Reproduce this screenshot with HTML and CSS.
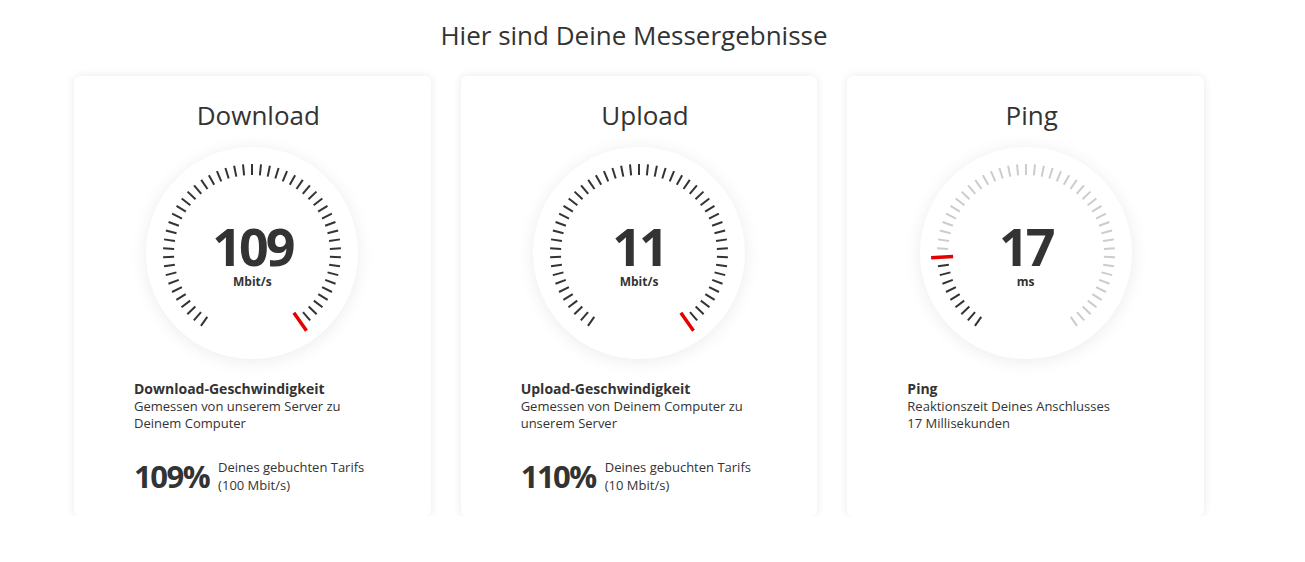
FILE: index.html
```html
<!DOCTYPE html>
<html lang="de">
<head>
  <meta charset="UTF-8" />
  <title>Messergebnisse</title>
  <link rel="stylesheet" href="styles.css">
</head>
<body>
  <div class="results">
    <h1 class="results-title">Hier sind Deine Messergebnisse</h1>

    <div class="cards">
      <div class="card">
        <h2 class="card-title">Download</h2>
        <div class="gauge">
          <svg class="dial" viewBox="-106 -106 212 212" data-filled="51" data-needle="50"></svg>
          <div class="gauge-value">
            <span class="gauge-number">109</span>
            <span class="gauge-unit">Mbit/s</span>
          </div>
        </div>
        <div class="info">
          <h3 class="info-title">Download-Geschwindigkeit</h3>
          <p class="info-text">Gemessen von unserem Server zu Deinem Computer</p>
        </div>
        <div class="tariff">
          <span class="tariff-percent">109%</span>
          <span class="tariff-text">Deines gebuchten Tarifs<br>(100 Mbit/s)</span>
        </div>
      </div>

      <div class="card">
        <h2 class="card-title">Upload</h2>
        <div class="gauge">
          <svg class="dial" viewBox="-106 -106 212 212" data-filled="51" data-needle="50"></svg>
          <div class="gauge-value">
            <span class="gauge-number">11</span>
            <span class="gauge-unit">Mbit/s</span>
          </div>
        </div>
        <div class="info">
          <h3 class="info-title">Upload-Geschwindigkeit</h3>
          <p class="info-text">Gemessen von Deinem Computer zu unserem Server</p>
        </div>
        <div class="tariff">
          <span class="tariff-percent">110%</span>
          <span class="tariff-text">Deines gebuchten Tarifs<br>(10 Mbit/s)</span>
        </div>
      </div>

      <div class="card">
        <h2 class="card-title">Ping</h2>
        <div class="gauge">
          <svg class="dial" viewBox="-106 -106 212 212" data-filled="9" data-needle="9"></svg>
          <div class="gauge-value">
            <span class="gauge-number">17</span>
            <span class="gauge-unit">ms</span>
          </div>
        </div>
        <div class="info">
          <h3 class="info-title">Ping</h3>
          <p class="info-text">Reaktionszeit Deines Anschlusses<br>17 Millisekunden</p>
        </div>
      </div>
    </div>
  </div>

  <script>
    // 51 ticks over 290 degrees, gap at the bottom
    const TICKS = 51;
    const START = -145;
    const STEP = 290 / (TICKS - 1);
    const NS = 'http://www.w3.org/2000/svg';

    document.querySelectorAll('.dial').forEach(svg => {
      const filled = parseInt(svg.dataset.filled, 10);
      const needle = parseInt(svg.dataset.needle, 10);

      for (let i = 0; i < TICKS; i++) {
        if (i === needle) continue;
        const line = document.createElementNS(NS, 'line');
        line.setAttribute('x1', 0);
        line.setAttribute('y1', -78);
        line.setAttribute('x2', 0);
        line.setAttribute('y2', -89);
        line.setAttribute('class', i < filled ? 'tick' : 'tick tick-off');
        line.setAttribute('transform', `rotate(${START + i * STEP})`);
        svg.appendChild(line);
      }

      const red = document.createElementNS(NS, 'line');
      red.setAttribute('x1', 0);
      red.setAttribute('y1', -73);
      red.setAttribute('x2', 0);
      red.setAttribute('y2', -95);
      red.setAttribute('class', 'needle');
      red.setAttribute('transform', `rotate(${START + needle * STEP})`);
      svg.appendChild(red);
    });
  </script>
</body>
</html>
```

FILE: styles.css
```css
body {
  margin: 0;
  padding: 0;
  background-color: #fff;
  color: #333;
  font-family: "Open Sans", "Liberation Sans", sans-serif;
}

.results {
  width: 1130px;
  margin-left: 74px;
  padding-top: 16px;
}

.results-title {
  margin: 0 10px 0 0;
  font-size: 26px;
  font-weight: 400;
  line-height: 38px;
  text-align: center;
}

.cards {
  display: flex;
  gap: 30px;
  margin-top: 22px;
}

.card {
  flex: 1;
  height: 440px;
  box-sizing: border-box;
  padding: 21px 60px 0;
  background: #fff;
  border-radius: 6px;
  box-shadow: 0 0 10px rgba(0, 0, 0, 0.09);
  display: flex;
  flex-direction: column;
}

.card-title {
  margin: 0;
  padding-left: 12px;
  font-size: 26px;
  font-weight: 400;
  line-height: 36px;
  text-align: center;
}

.gauge {
  position: relative;
  width: 212px;
  height: 212px;
  margin: 14px auto 0;
  border-radius: 50%;
  background: #fff;
  box-shadow: 0 2px 18px rgba(0, 0, 0, 0.08);
}

.dial {
  display: block;
  width: 212px;
  height: 212px;
}

.tick {
  stroke: #333;
  stroke-width: 2;
}

.tick-off {
  stroke: #ccc;
}

.needle {
  stroke: #e60000;
  stroke-width: 3.5;
}

.gauge-value {
  position: absolute;
  left: 0;
  right: 0;
  top: 76px;
  display: flex;
  flex-direction: column;
  align-items: center;
}

.gauge-number {
  font-size: 52px;
  font-weight: 700;
  line-height: 46px;
  letter-spacing: -3px;
}

.gauge-unit {
  margin-top: 6px;
  font-size: 12px;
  font-weight: 700;
  line-height: 14px;
}

.info {
  margin-top: 21px;
}

.info-title {
  margin: 0;
  font-size: 14px;
  font-weight: 700;
  line-height: 18px;
}

.info-text {
  margin: 0;
  font-size: 13px;
  line-height: 17px;
}

.tariff {
  display: flex;
  align-items: flex-start;
  gap: 9px;
  margin-top: 25px;
}

.tariff-percent {
  font-size: 31px;
  font-weight: 700;
  line-height: 38px;
  letter-spacing: -1.5px;
}

.tariff-text {
  padding-top: 1px;
  font-size: 13px;
  line-height: 18px;
}
```
